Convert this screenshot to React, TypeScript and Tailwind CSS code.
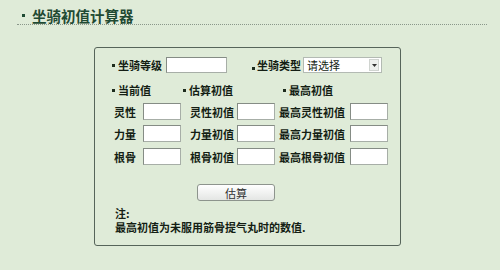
import React from "react";

const Dot = () => <span className="inline-block w-[3px] h-[3px] bg-[#1d2b1d] shrink-0" />;

const Box = ({ w, h = 17 }: { w: number; h?: number }) => (
  <div
    className="bg-white border border-[#a7aea7] border-t-[#858c85] border-l-[#858c85] shrink-0"
    style={{ width: w, height: h }}
  />
);

const StatRow = ({ a, b, c, mt }: { a: string; b: string; c: string; mt: string }) => (
  <div className={`flex items-center h-[17px] pl-[19px] ${mt}`}>
    <span className="w-[29px] shrink-0">{a}</span>
    <Box w={38} />
    <span className="w-[47px] ml-[9px] shrink-0">{b}</span>
    <Box w={38} />
    <span className="w-[71px] ml-[4px] shrink-0">{c}</span>
    <Box w={38} />
  </div>
);

export default function App() {
  return (
    <div className="w-[500px] h-[270px] bg-[#dfebd8] pt-[7px] font-['Noto_Sans_CJK_SC',sans-serif] text-[11px] leading-[14px] text-[#141e14]">
      <div className="ml-[17px] w-[470px] h-[18px] border-b border-dotted border-[#8a978a] flex items-center pl-[5px]">
        <span className="inline-block w-[3px] h-[3px] bg-[#1f4a33]" />
        <span className="ml-[7px] text-[14.5px] leading-[17px] font-bold text-[#1f4a33]">坐骑初值计算器</span>
      </div>
      <div className="ml-[94px] mt-[22px] w-[307px] h-[199px] border border-[#56645a] rounded-[3px] font-bold">
        <div className="flex items-center h-[16px] mt-[9px] pl-[17px]">
          <Dot />
          <span className="ml-[3px] w-[44px] shrink-0">坐骑等级</span>
          <div className="ml-[4px]"><Box w={61} h={16} /></div>
          <div className="ml-[25px]"><Dot /></div>
          <span className="ml-[2px] w-[44px] shrink-0">坐骑类型</span>
          <div className="ml-[2px] w-[79px] h-[16px] bg-white border border-[#b3bab3] flex items-center justify-between pl-[3px] pr-[2px]">
            <span className="font-normal text-[11px] leading-[14px]">请选择</span>
            <div className="w-[10px] h-[12px] bg-[#eef0ee] border border-[#d0d4d0] flex items-center justify-center">
              <svg width="5" height="3" viewBox="0 0 5 3"><path d="M0 0h5L2.5 3z" fill="#333" /></svg>
            </div>
          </div>
        </div>
        <div className="flex items-center h-[14px] mt-[10px] pl-[17px]">
          <div className="w-[71px] flex items-center shrink-0"><Dot /><span className="ml-[3px]">当前值</span></div>
          <div className="w-[100px] flex items-center shrink-0"><Dot /><span className="ml-[3px]">估算初值</span></div>
          <div className="flex items-center"><Dot /><span className="ml-[3px]">最高初值</span></div>
        </div>
        <StatRow a="灵性" b="灵性初值" c="最高灵性初值" mt="mt-[6px]" />
        <StatRow a="力量" b="力量初值" c="最高力量初值" mt="mt-[5px]" />
        <StatRow a="根骨" b="根骨初值" c="最高根骨初值" mt="mt-[6px]" />
        <div className="mt-[19px] ml-[102px]">
          <button className="w-[78px] h-[17px] rounded-[3px] border border-[#8d948d] bg-gradient-to-b from-white to-[#e4e6e4] font-normal text-[11px] leading-[14px] text-[#333] flex items-center justify-center">
            估算
          </button>
        </div>
        <div className="mt-[5px] pl-[20px]">
          <div>注:</div>
          <div>最高初值为未服用筋骨提气丸时的数值.</div>
        </div>
      </div>
    </div>
  );
}
